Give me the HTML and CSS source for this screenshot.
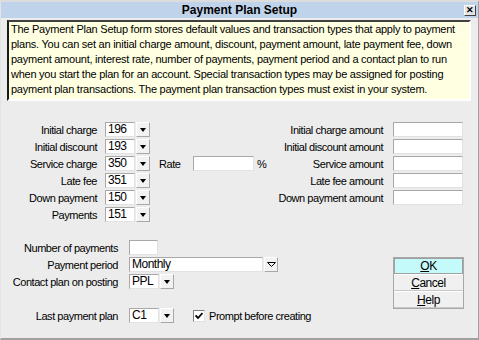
FILE: index.html
```html
<!DOCTYPE html>
<html lang="en">
<head>
    <meta charset="UTF-8">
    <title>Payment Plan Setup</title>
    <link rel="stylesheet" href="styles.css">
</head>
<body>
    <div class="window">
        <div class="titlebar">
            <span></span>
            <span class="title">Payment Plan Setup</span>
            <span class="close">&#x2715;</span>
        </div>

        <div class="desc">
            The Payment Plan Setup form stores default values and transaction types that apply to payment<br>
            plans. You can set an initial charge amount, discount, payment amount, late payment fee, down<br>
            payment amount, interest rate, number of payments, payment period and a contact plan to run<br>
            when you start the plan for an account. Special transaction types may be assigned for posting<br>
            payment plan transactions. The payment plan transaction types must exist in your system.
        </div>

        <div class="main-grid">
            <!-- row 1 -->
            <div class="c-lab">Initial charge</div>
            <div class="c-in field">196</div>
            <div class="c-btn drop"></div>
            <div class="c-al">Initial charge amount</div>
            <div class="c-ai field"></div>
            <!-- row 2 -->
            <div class="c-lab">Initial discount</div>
            <div class="c-in field">193</div>
            <div class="c-btn drop"></div>
            <div class="c-al">Initial discount amount</div>
            <div class="c-ai field"></div>
            <!-- row 3 -->
            <div class="c-lab">Service charge</div>
            <div class="c-in field">350</div>
            <div class="c-btn drop"></div>
            <div class="c-rl">Rate</div>
            <div class="c-ri field"></div>
            <div class="c-pct">%</div>
            <div class="c-al">Service amount</div>
            <div class="c-ai field"></div>
            <!-- row 4 -->
            <div class="c-lab">Late fee</div>
            <div class="c-in field">351</div>
            <div class="c-btn drop"></div>
            <div class="c-al">Late fee amount</div>
            <div class="c-ai field"></div>
            <!-- row 5 -->
            <div class="c-lab">Down payment</div>
            <div class="c-in field">150</div>
            <div class="c-btn drop"></div>
            <div class="c-al">Down payment amount</div>
            <div class="c-ai field"></div>
            <!-- row 6 -->
            <div class="c-lab">Payments</div>
            <div class="c-in field">151</div>
            <div class="c-btn drop"></div>
        </div>

        <div class="lower">
            <div class="lower-rows">
                <div class="row">
                    <div class="lab">Number of payments</div>
                    <div class="field w-num"></div>
                </div>
                <div class="row">
                    <div class="lab">Payment period</div>
                    <div class="field w-period">Monthly</div>
                    <div class="drop drop-open">
                        <svg width="9" height="5" viewBox="0 0 9 5"><path d="M0.5 0.5h8L4.5 4.5z" fill="none" stroke="#000" stroke-width="1"/></svg>
                    </div>
                </div>
                <div class="row">
                    <div class="lab">Contact plan on posting</div>
                    <div class="field w-code">PPL</div>
                    <div class="drop"></div>
                </div>
                <div class="row"></div>
                <div class="row">
                    <div class="lab">Last payment plan</div>
                    <div class="field w-code">C1</div>
                    <div class="drop"></div>
                    <div class="check">
                        <svg width="8" height="8" viewBox="0 0 8 8"><path d="M0.5 3.5l2.5 2.5 4.5-5" fill="none" stroke="#000" stroke-width="1.8"/></svg>
                    </div>
                    <div class="check-label">Prompt before creating</div>
                </div>
            </div>

            <div class="buttons">
                <div class="btn btn-default"><span><u>O</u>K</span></div>
                <div class="btn"><u>C</u>ancel</div>
                <div class="btn"><u>H</u>elp</div>
            </div>
        </div>
    </div>
</body>
</html>
```

FILE: styles.css
```css
body {
    margin: 0;
    width: 479px;
    height: 340px;
    overflow: hidden;
    font-family: "Liberation Sans", Arial, sans-serif;
    font-size: 11px;
    letter-spacing: -0.45px;
    color: #000;
}
.window {
    box-sizing: border-box;
    width: 479px;
    height: 340px;
    background-color: #ececec;
    border-top: 2px solid #dcdcdc;
    border-left: 1px solid #e4e4e4;
    border-right: 1px solid #a0a0a0;
    border-bottom: 2px solid #a0a0a0;
}
.titlebar {
    display: grid;
    grid-template-columns: 1fr auto 1fr;
    align-items: center;
    height: 16px;
    background-color: #bfd3ea;
}
.title {
    font-size: 12px;
    font-weight: bold;
    letter-spacing: 0;
}
.close {
    justify-self: end;
    margin-right: 2px;
    box-sizing: border-box;
    width: 12px;
    height: 11px;
    background-color: #e4e4e4;
    border: 1px solid;
    border-color: #fff #404040 #404040 #fff;
    font-size: 9px;
    font-weight: bold;
    line-height: 9px;
    text-align: center;
    letter-spacing: 0;
}
.desc {
    margin: 2px 7px 0 6px;
    padding: 0 2px 2px 2px;
    background-color: #ffffe1;
    border: 2px solid;
    border-color: #404040 #fff #fff #1a1a1a;
    line-height: 15px;
    letter-spacing: -0.25px;
    white-space: nowrap;
}
.main-grid {
    display: grid;
    margin-top: 20px;
    grid-template-columns: 104px 31px 14px 43px 60px 20px 120px 70px;
    grid-auto-rows: 17px;
    align-items: center;
}
.c-lab { grid-column: 1; text-align: right; padding-right: 8px; }
.c-in { grid-column: 2; width: 30px; }
.c-btn { grid-column: 3; }
.c-rl { grid-column: 4; padding-left: 9px; }
.c-ri { grid-column: 5; width: 61px; }
.c-pct { grid-column: 6; padding-left: 4px; }
.c-al { grid-column: 7; text-align: right; padding-right: 10px; }
.c-ai { grid-column: 8; width: 70px; }

.field {
    box-sizing: border-box;
    height: 15px;
    padding-left: 2px;
    background-color: #fff;
    border: 1px solid;
    border-color: #a8a8a8 #e2e2e2 #e2e2e2 #a8a8a8;
    line-height: 13px;
    font-size: 12px;
    letter-spacing: -0.5px;
}
.drop {
    box-sizing: border-box;
    display: flex;
    align-items: center;
    justify-content: center;
    width: 14px;
    height: 15px;
    background-color: #f2f2f2;
    border: 1px solid;
    border-color: #fff #a8a8a8 #a8a8a8 #fff;
}
.drop::after {
    content: "";
    border-top: 4px solid #000;
    border-left: 3px solid transparent;
    border-right: 3px solid transparent;
}
.drop-open::after {
    display: none;
}

.lower {
    display: flex;
    margin-top: 16px;
}
.lower-rows {
    display: flex;
    flex-direction: column;
}
.row {
    display: flex;
    align-items: center;
    height: 17px;
}
.lab {
    width: 117px;
    padding-right: 11px;
    text-align: right;
    white-space: nowrap;
}
.row .drop {
    margin-left: 1px;
}
.w-num { width: 29px; }
.w-period { width: 134px; }
.w-code { width: 30px; }
.check {
    box-sizing: border-box;
    display: flex;
    align-items: center;
    justify-content: center;
    width: 12px;
    height: 12px;
    margin-left: 19px;
    background-color: #fff;
    border: 1px solid;
    border-color: #808080 #e2e2e2 #e2e2e2 #808080;
}
.check-label {
    margin-left: 4px;
}
.buttons {
    display: flex;
    flex-direction: column;
    margin: 18px 0 0 auto;
    margin-right: 14px;
    width: 69px;
    border: 1px solid #a8a8a8;
    align-self: flex-start;
}
.btn {
    box-sizing: border-box;
    height: 17px;
    display: flex;
    align-items: center;
    justify-content: center;
    background-color: #f0f0f0;
    border-top: 1px solid #fff;
    border-bottom: 1px solid #c8c8c8;
    font-size: 12px;
}
.btn-default {
    background-color: #c4fafa;
    border: 1px solid #a0a0a0;
    height: 16px;
}
```
